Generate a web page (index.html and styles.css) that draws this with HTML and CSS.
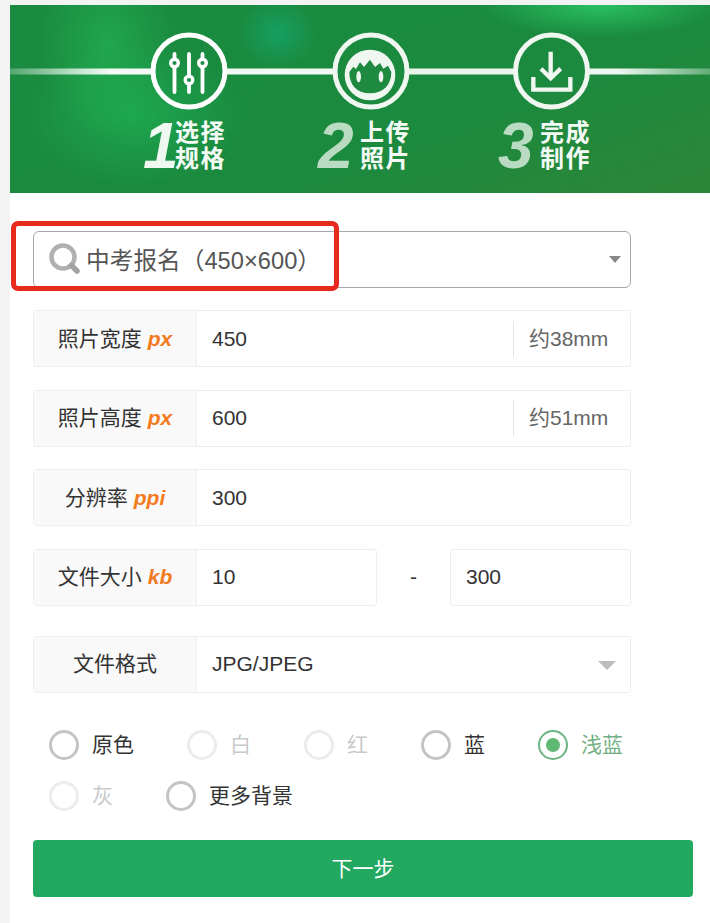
FILE: index.html
```html
<!DOCTYPE html>
<html lang="zh-CN">
<head>
<meta charset="utf-8">
<title>选择规格</title>
<link rel="stylesheet" href="styles.css">
</head>
<body>
<main class="page">
  <header class="banner">
    <svg class="banner-art" viewBox="10 5 700 188" width="700" height="188" aria-hidden="true">
      <defs>
        <linearGradient id="fadeL" x1="10" x2="110" y1="0" y2="0" gradientUnits="userSpaceOnUse">
          <stop offset="0" stop-color="#fff" stop-opacity=".25"/>
          <stop offset="1" stop-color="#fff" stop-opacity=".95"/>
        </linearGradient>
        <linearGradient id="fadeR" x1="620" x2="710" y1="0" y2="0" gradientUnits="userSpaceOnUse">
          <stop offset="0" stop-color="#fff" stop-opacity=".92"/>
          <stop offset="1" stop-color="#fff" stop-opacity=".3"/>
        </linearGradient>
      </defs>
      <g class="art">
        <rect x="10" y="68.5" width="142" height="6" fill="url(#fadeL)"/>
        <rect x="226" y="68.5" width="108" height="6" fill="#f2f8f3"/>
        <rect x="408" y="68.5" width="107" height="6" fill="#eaf4ec"/>
        <rect x="589" y="68.5" width="121" height="6" fill="url(#fadeR)"/>

        <circle class="ring" cx="189" cy="71" r="36"/>
        <g class="sliders">
          <path d="M174.5 54V92M189 54V92M202.5 54V92"/>
          <circle cx="174.5" cy="63" r="3.8"/>
          <circle cx="189" cy="80" r="3.8"/>
          <circle cx="202.5" cy="63" r="3.8"/>
        </g>

        <circle class="ring soft" cx="371" cy="71" r="36"/>
        <g transform="translate(320 25) scale(.33333)">
          <circle cx="150" cy="150" r="76" fill="#f0f7f1"/>
          <path fill="#1d8a40" d="M88 141 L100 125 L108 132 L120 112 L132 126 L150 104 L165 126 L180 114 L190 131 L204 122 L214 141 C214 180 190 205 150 205 C110 205 88 180 88 141Z"/>
          <ellipse cx="116" cy="155" rx="7" ry="17" fill="#f0f7f1"/>
          <ellipse cx="183" cy="155" rx="7" ry="17" fill="#f0f7f1"/>
        </g>

        <circle class="ring soft" cx="551.5" cy="71" r="36"/>
        <g transform="translate(500 25) scale(.33333)" class="download">
          <path d="M152 80V160M123 131L152 160L182 131M100 156V194H211V156"/>
        </g>
      </g>
    </svg>
    <div class="steps">
      <div class="step step-first">
        <span class="digit">1</span>
        <span class="step-name">选择<br>规格</span>
      </div>
      <div class="step">
        <span class="digit dim">2</span>
        <span class="step-name">上传<br>照片</span>
      </div>
      <div class="step">
        <span class="digit dim">3</span>
        <span class="step-name">完成<br>制作</span>
      </div>
    </div>
  </header>

  <form class="form">
    <div class="spec-select">
      <svg class="search-icon" viewBox="0 0 32 32" width="32" height="32" aria-hidden="true">
        <circle cx="15" cy="14" r="11.5"/>
        <path d="M23.5 22.5L29 28"/>
      </svg>
      <span class="spec-text">中考报名（450×600）</span>
      <span class="caret caret-small"></span>
    </div>

    <div class="row">
      <div class="label"><span class="cn">照片宽度</span><em>px</em></div>
      <div class="value">450</div>
      <div class="suffix">约38mm</div>
    </div>
    <div class="row">
      <div class="label"><span class="cn">照片高度</span><em>px</em></div>
      <div class="value">600</div>
      <div class="suffix">约51mm</div>
    </div>
    <div class="row">
      <div class="label"><span class="cn">分辨率</span><em>ppi</em></div>
      <div class="value">300</div>
    </div>
    <div class="range">
      <div class="row range-from">
        <div class="label"><span class="cn">文件大小</span><em>kb</em></div>
        <div class="value">10</div>
      </div>
      <span class="dash">-</span>
      <div class="row range-to">
        <div class="value">300</div>
      </div>
    </div>
    <div class="row format">
      <div class="label"><span class="cn">文件格式</span></div>
      <div class="value">JPG/JPEG</div>
      <span class="caret caret-large"></span>
    </div>

    <div class="radios">
      <div class="radio"><span class="dot"></span><span class="cn">原色</span></div>
      <div class="radio off"><span class="dot"></span><span class="cn">白</span></div>
      <div class="radio off"><span class="dot"></span><span class="cn">红</span></div>
      <div class="radio"><span class="dot"></span><span class="cn">蓝</span></div>
      <div class="radio on"><span class="dot"></span><span class="cn">浅蓝</span></div>
      <div class="radio off"><span class="dot"></span><span class="cn">灰</span></div>
      <div class="radio"><span class="dot"></span><span class="cn">更多背景</span></div>
    </div>

    <button class="next" type="button"><span class="cn">下一步</span></button>
    <div class="highlight"></div>
  </form>
</main>
</body>
</html>
```

FILE: styles.css
```css
* { box-sizing: border-box; }

html, body { height: 100%; }

body {
  margin: 0;
  height: 923px;
  padding: 5px 0 0 10px;
  overflow: hidden;
  background: #f3f3f3;
  font-family: "Liberation Sans", "Noto Sans CJK SC", sans-serif;
  font-size: 21px;
  color: #333;
}

.page {
  height: 918px;
  background: #fff;
}

.cn {
  display: block;
  margin-bottom: 4px;
}

/* banner */
.banner {
  position: relative;
  height: 188px;
  background:
    radial-gradient(ellipse 70px 90px at 97px 40px, rgba(36, 184, 88, .6), rgba(36, 184, 88, 0) 100%),
    radial-gradient(ellipse 40px 36px at 268px 28px, rgba(20, 165, 105, .8), rgba(20, 165, 105, 0) 100%),
    radial-gradient(ellipse 110px 70px at 125px 110px, rgba(30, 175, 85, .75), rgba(30, 175, 85, 0) 100%),
    radial-gradient(ellipse 120px 32px at 590px 0, rgba(42, 195, 100, .95), rgba(42, 195, 100, 0) 100%),
    linear-gradient(160deg, #1a8b40 0%, #1b8a3f 60%, #2c8637 100%);
}

.banner-art { display: block; }

.art { filter: blur(.35px); }

.ring {
  fill: none;
  stroke: #fff;
  stroke-width: 5;
}

.ring.soft { stroke: #f0f7f1; }

.sliders path {
  fill: none;
  stroke: #fff;
  stroke-width: 3.8;
  stroke-linecap: round;
}

.sliders circle {
  fill: #1d8f47;
  stroke: #fff;
  stroke-width: 3.4;
}

.download path {
  fill: none;
  stroke: #f0f7f1;
  stroke-width: 13;
}

.steps {
  position: absolute;
  left: 133px;
  top: 106px;
  display: grid;
  grid-template-columns: 175px 180px auto;
}

.step { display: flex; }

.digit {
  flex: none;
  width: 42px;
  margin-top: 1px;
  font-size: 64px;
  line-height: 69px;
  font-weight: 700;
  font-style: italic;
  color: #eef7f0;
}

.step-first .digit {
  width: 32px;
  letter-spacing: -5px;
}

.digit.dim { color: #b9dbc1; }

.step-name {
  margin-top: 8.7px;
  font-size: 24px;
  line-height: 26px;
  font-weight: 700;
  letter-spacing: 1.5px;
  color: #f4faf5;
}

/* form */
.form {
  position: relative;
  display: flex;
  flex-direction: column;
  gap: 22.5px;
  padding: 37.75px 0 0 23px;
}

.spec-select {
  position: relative;
  display: flex;
  align-items: center;
  width: 598px;
  height: 57px;
  padding-left: 14px;
  border: 1px solid #a8a8a8;
  border-radius: 6px;
}

.search-icon {
  flex: none;
  margin-right: 6px;
  fill: none;
  stroke: #b0b0b0;
  stroke-width: 4.5;
}

.search-icon path {
  stroke: #a2a2a2;
  stroke-width: 5.5;
  stroke-linecap: round;
}

.spec-text {
  margin-bottom: 1px;
  font-size: 23.7px;
  color: #555;
}

.caret {
  position: absolute;
  width: 0;
  height: 0;
  border-style: solid;
  border-color: transparent;
}

.caret-small {
  right: 9px;
  top: 24px;
  border-width: 7px 6px 0;
  border-top-color: #888;
}

.caret-large {
  right: 14px;
  top: 24px;
  border-width: 9px 9px 0;
  border-top-color: #bdbdbd;
}

.row {
  position: relative;
  display: flex;
  align-items: center;
  width: 598px;
  height: 57px;
  border: 1px solid #eee;
  border-radius: 3px;
}

.label {
  flex: none;
  align-self: stretch;
  display: flex;
  align-items: center;
  justify-content: center;
  gap: 6px;
  width: 163px;
  background: #f9f9f9;
  border-right: 1px solid #eee;
  color: #333;
}

.label em {
  font-weight: 700;
  font-style: italic;
  color: #f37a1f;
}

.value {
  flex: 1;
  padding-left: 15px;
  color: #333;
}

.suffix {
  flex: none;
  width: 117px;
  height: 36px;
  line-height: 36px;
  padding-left: 15px;
  border-left: 1px solid #e4e4e4;
  color: #666;
}

.range {
  display: flex;
  align-items: center;
  width: 598px;
}

.range-from { width: 344px; }

.range-to { width: 181px; }

.dash {
  width: 73px;
  text-align: center;
}

.format { margin-top: 7.5px; }

.radios {
  display: flex;
  flex-wrap: wrap;
  gap: 21px 53px;
  width: 620px;
  margin-top: 14.75px;
  padding-left: 16px;
}

.radio {
  display: flex;
  align-items: center;
  gap: 13px;
  height: 30px;
  color: #333;
}

.dot {
  position: relative;
  flex: none;
  width: 30px;
  height: 30px;
  border: 3px solid #c4c4c4;
  border-radius: 50%;
}

.radio.off { color: #c9c9c9; }

.radio.off .dot { border-color: #ececec; }

.radio.on { color: #74b086; }

.radio.on .dot {
  border: 2.5px solid #6cb483;
}

.radio.on .dot::after {
  content: "";
  position: absolute;
  inset: 6px;
  border-radius: 50%;
  background: #5fb874;
}

.next {
  width: 660px;
  height: 57px;
  margin-top: 6.5px;
  border: 0;
  border-radius: 4px;
  background: #23a860;
  color: #fff;
  font: inherit;
}

.highlight {
  position: absolute;
  left: 1px;
  top: 28px;
  width: 328px;
  height: 70px;
  border: 5px solid #e62a1c;
  border-radius: 7px;
  pointer-events: none;
}
```
